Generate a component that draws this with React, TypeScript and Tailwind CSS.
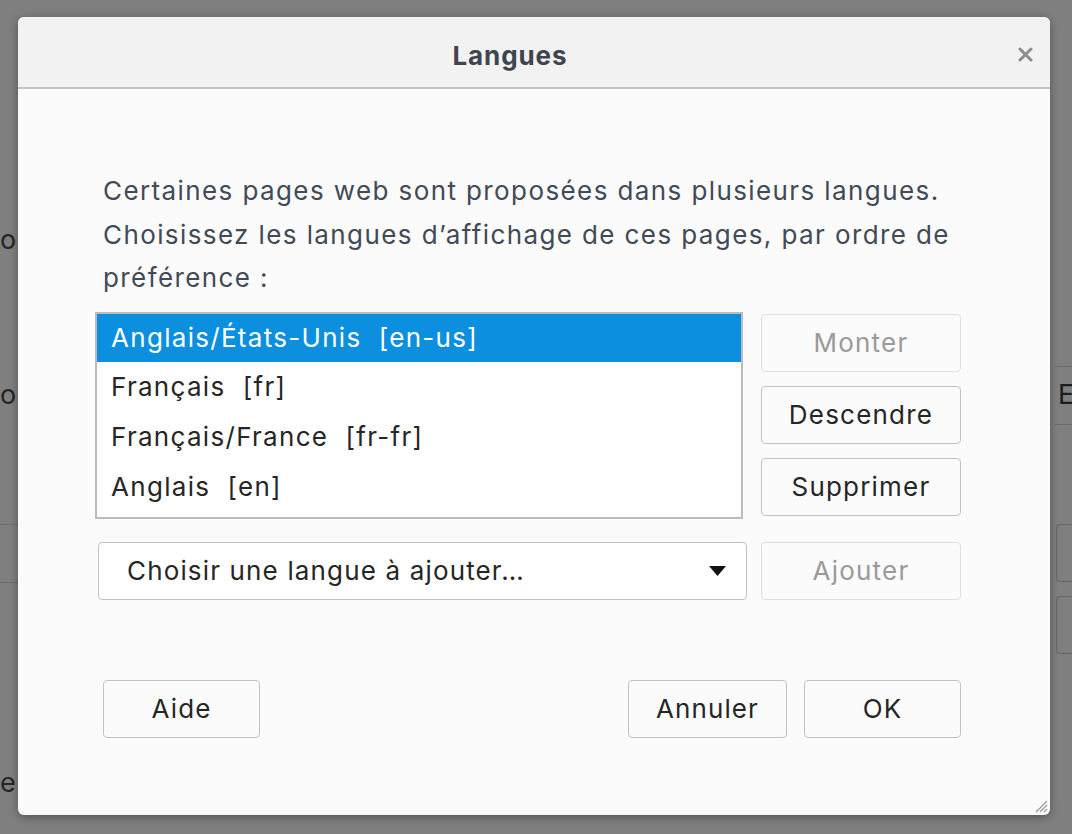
const ui = "font-['Inter','Liberation_Sans',sans-serif]";

const SideButton = ({ label, disabled }: { label: string; disabled?: boolean }) => (
  <button
    className={`h-[58px] w-[200px] rounded-[4px] border-[1.5px] bg-[#fbfbfb] text-[26px] tracking-[1.2px] ${ui} ${
      disabled ? 'border-[#dedede] text-[#9a9a9a]' : 'border-[#c2c2c2] text-[#262626]'
    }`}
  >
    {label}
  </button>
);

const FooterButton = ({ label, w }: { label: string; w: string }) => (
  <button
    className={`h-[58px] ${w} rounded-[4px] border-[1.5px] border-[#c2c2c2] bg-[#fbfbfb] text-[26px] tracking-[1.1px] text-[#262626] ${ui}`}
  >
    {label}
  </button>
);

const languages = [
  'Anglais/États-Unis\u00a0\u00a0[en-us]',
  'Français\u00a0\u00a0[fr]',
  'Français/France\u00a0\u00a0[fr-fr]',
  'Anglais\u00a0\u00a0[en]',
];

export default function App() {
  return (
    <div className={`relative h-[834px] w-[1072px] overflow-hidden bg-[#7f7f7f] ${ui}`}>
      {/* dimmed page behind the dialog */}
      <div className="flex h-full justify-between">
        <div className="flex w-[18px] flex-col overflow-hidden pt-[220px] text-[27px] text-[#262626]">
          <div className="h-[40px] leading-[40px]">o</div>
          <div className="mt-[115px] h-[40px] leading-[40px]">o</div>
          <div className="mt-[109px] h-px w-full bg-[#6a6a6a]" />
          <div className="mt-[57px] h-px w-full bg-[#6a6a6a]" />
          <div className="mt-[180px] h-[40px] leading-[40px] whitespace-nowrap">e</div>
        </div>
        <div className="flex w-[22px] flex-col items-end overflow-hidden pt-[366px]">
          <div className="flex h-[59px] w-[17px] items-center border-y border-[#6a6a6a] pl-[3px] text-[27px] text-[#1c1c1c]">
            E
          </div>
          <div className="mt-[99px] h-[58px] w-[16px] rounded-l-[4px] border-y border-l border-[#666]" />
          <div className="mt-[14px] h-[58px] w-[16px] rounded-l-[4px] border-y border-l border-[#666]" />
        </div>
      </div>

      {/* dialog */}
      <div className="absolute left-[18px] top-[17px] flex h-[798px] w-[1032px] flex-col overflow-hidden rounded-[6px] bg-[#fbfbfb] shadow-[0_2px_10px_rgba(0,0,0,0.35)]">
        <div className="relative flex h-[72px] shrink-0 items-center justify-center border-b-2 border-[#c4c4c4] bg-[#f2f2f2] pr-[48px] pt-[6px]">
          <span className="text-[26px] font-bold tracking-[0.9px] text-[#3e4550]">Langues</span>
          <svg className="absolute right-[17px] top-[30px]" width="15" height="15" viewBox="0 0 15 15">
            <path d="M2 2 L13 13 M13 2 L2 13" stroke="#8c8c8c" strokeWidth="3" strokeLinecap="round" />
          </svg>
        </div>

        <div className="flex flex-1 flex-col pl-[77px] pr-[89px] pt-[80px]">
          <p className="whitespace-nowrap pl-[8px] text-[26px] leading-[43.5px] tracking-[1.4px] text-[#414a56]">
            Certaines pages web sont proposées dans plusieurs langues.
            <br />
            Choisissez les langues d’affichage de ces pages, par ordre de
            <br />
            préférence :
          </p>

          <div className="mt-[12px] flex gap-[18px]">
            <div className="h-[207px] w-[648px] border-2 border-[#bcbcbc] bg-white">
              {languages.map((l, i) => (
                <div
                  key={l}
                  className={`flex items-center pl-[14px] text-[26px] tracking-[1.3px] ${
                    i === 0 ? 'h-[48px] bg-[#0b8fde] text-white' : 'h-[50px] text-[#262626]'
                  }`}
                >
                  {l}
                </div>
              ))}
            </div>
            <div className="flex flex-col gap-[14px] pt-[2px]">
              <SideButton label="Monter" disabled />
              <SideButton label="Descendre" />
              <SideButton label="Supprimer" />
            </div>
          </div>

          <div className="mt-[23px] flex gap-[14px] pl-[3px]">
            <div className="flex h-[58px] w-[649px] items-center justify-between rounded-[4px] border-[1.5px] border-[#c2c2c2] bg-white pl-[28px] pr-[20px]">
              <span className="text-[26px] tracking-[1.15px] text-[#262626]">Choisir une langue à ajouter…</span>
              <svg width="17" height="10" viewBox="0 0 17 10">
                <path d="M0 0 H17 L8.5 10 Z" fill="#111" />
              </svg>
            </div>
            <SideButton label="Ajouter" disabled />
          </div>

          <div className="mt-[80px] flex items-center pl-[8px]">
            <FooterButton label="Aide" w="w-[157px]" />
            <div className="flex-1" />
            <FooterButton label="Annuler" w="w-[159px]" />
            <div className="w-[17px]" />
            <FooterButton label="OK" w="w-[157px]" />
          </div>
        </div>

        <svg className="absolute bottom-[2px] right-[2px]" width="16" height="16" viewBox="0 0 16 16">
          <path d="M15 4 L4 15 M15 8 L8 15 M15 12 L12 15" stroke="#9a9a9a" strokeWidth="1.2" />
        </svg>
      </div>
    </div>
  );
}
